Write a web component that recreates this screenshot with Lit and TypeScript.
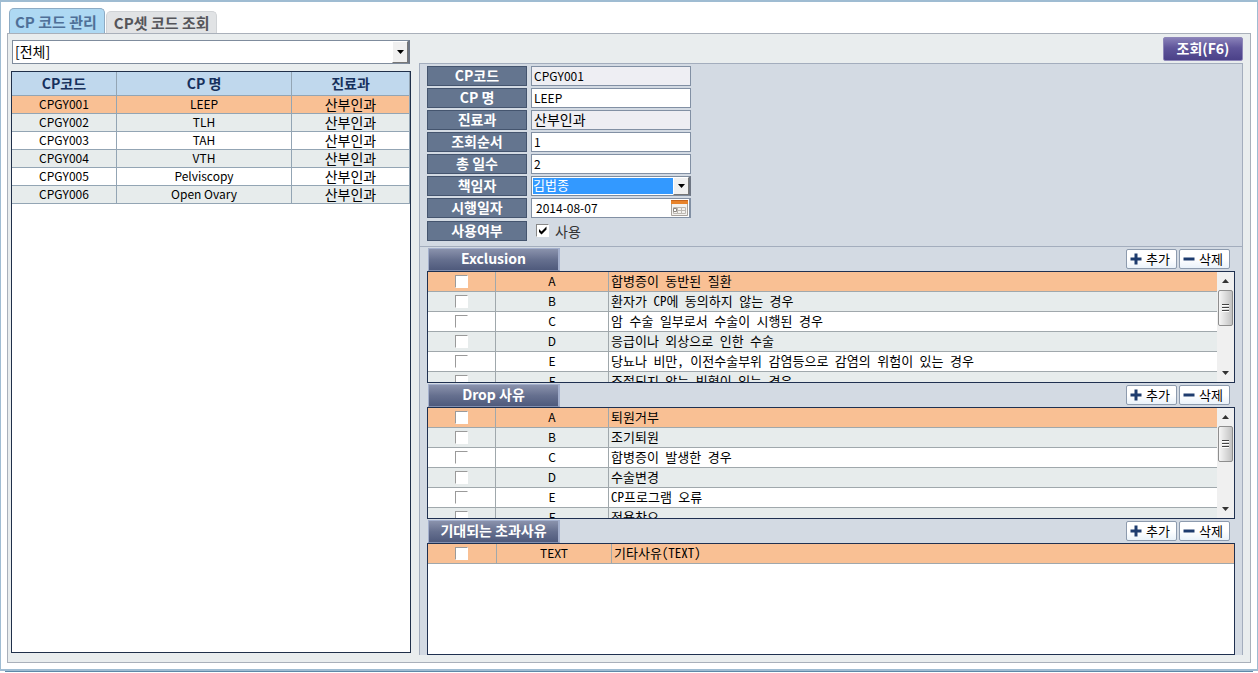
import { LitElement, html, css, nothing, svg } from "lit";
import { customElement, property, state } from "lit/decorators.js";
import { classMap } from "lit/directives/class-map.js";

const arrowDown = html`<svg class="tri" viewBox="0 0 7 4" width="7" height="4" aria-hidden="true"><path d="M0 0h7L3.500 4z" fill="#000" /></svg>`;

@customElement("drop-box")
class DropBox extends LitElement {
  @property() name = "";
  @property() label = "";
  @property({ type: Array }) options: string[] = [];
  @property({ type: Boolean, reflect: true }) highlighted = false;

  static styles = css`
    :host { display: block; position: relative; height: 24px; }
    select {
      appearance: none; display: block; box-sizing: border-box; width: 100%; height: 100%; margin: 0;
      padding: 0 20px 3px 2px; border: 1px solid #7f8c9d; border-right: 2px solid #6e7684; border-radius: 0;
      background: #fff; color: #000; outline: none;
      font: 14px/18px "Noto Sans CJK KR", sans-serif;
    }
    .button {
      position: absolute; top: 1px; right: 2px; bottom: 1px; width: 16px; box-sizing: border-box;
      display: grid; place-items: center; pointer-events: none;
      background: #f0f0f0; border: 1px solid #fff; border-right-color: #777; border-bottom-color: #777;
    }
    :host([highlighted]) { height: 20px; }
    :host([highlighted]) select {
      padding-left: 1px; color: #fff; font-size: 13px; line-height: 16px;
      background: #3399ff; box-shadow: inset 0 0 0 1px #fff;
    }
  `;

  render() {
    return html`
      <select id="box" name=${this.name} aria-label=${this.label}>
        ${this.options.map((o) => html`<option>${o}</option>`)}
      </select>
      <span class="button">${arrowDown}</span>
    `;
  }
}

interface Reason { code: string; text: string; }

@customElement("reason-section")
class ReasonSection extends LitElement {
  @property() heading = "";
  @property({ type: Array }) rows: Reason[] = [];
  @property({ type: Boolean, reflect: true }) fill = false;
  @state() private selected = 0;

  static styles = css`
    :host { display: flex; flex-direction: column; font-family: "Noto Sans CJK KR", sans-serif; }
    :host([fill]) { flex: 1; }
    .bar { display: flex; align-items: center; height: 24px; padding: 0 5px 0 1px; gap: 2px; box-sizing: border-box; }
    h2 {
      margin: 0 auto 0 0; width: 132px; height: 23px; box-sizing: border-box; border: 1px solid #a3afcc;
      border-right-width: 2px; border-bottom: 1px solid #8390b0;
      background: linear-gradient(#8a92ac, #66708f 50%, #4f5a7c); color: #fff;
      font-size: 14px; line-height: 18px; font-weight: 700; text-align: center; white-space: nowrap;
    }
    .act {
      display: flex; align-items: center; gap: 4px; width: 51px; height: 20px; box-sizing: border-box; margin: 0; padding: 0 0 1px 3px;
      border: 1px solid #8d9bae; border-radius: 2px; background: linear-gradient(#fff 50%, #eaf2fa);
      color: #000; font: 13px/16px "Noto Sans CJK KR", sans-serif; white-space: nowrap;
    }
    .act svg { flex: none; }
    .grid { display: flex; height: 112px; box-sizing: border-box; border: 1px solid #1f3050; background: #fff; overflow: hidden; }
    :host([fill]) .grid { flex: 1; height: auto; min-height: 112px; }
    .view { flex: 1; min-width: 0; overflow-y: auto; scrollbar-width: none; }
    table { width: 100%; table-layout: fixed; border-spacing: 0; }
    .pick { width: 68px; }
    .code { width: 113px; }
    :host([fill]) .pick { width: 69px; }
    :host([fill]) .code { width: 115px; }
    td {
      height: 20px; box-sizing: border-box; padding: 0 0 2px; border-bottom: 1px solid #a0a8ac; border-right: 1px solid #a0a8ac;
      font-size: 12px; line-height: 16px; text-align: center; white-space: nowrap; overflow: hidden;
    }
    td:first-child { padding: 0; }
    td:last-child { border-right: 0; text-align: left; padding-left: 2px; font-size: 13px; font-family: "Noto Sans Mono CJK KR", "Noto Sans CJK KR", sans-serif; }
    tr:nth-child(even) td { background: #e7ecec; }
    tr.on td { background: #f9c094; }
    input {
      appearance: none; display: block; margin: 0 0 0 27px; width: 13px; height: 13px; box-sizing: border-box;
      background: #fff; border: 1px solid #fff; border-top-color: #9a9a9a; border-left-color: #9a9a9a; border-radius: 0;
    }
    .scroll { width: 17px; flex: none; display: flex; flex-direction: column; align-items: center; background: #f0f0f0; }
    .step { flex: none; width: 17px; height: 18px; padding: 0; border: 0; background: none; display: grid; place-items: center; }
    .thumb {
      width: 15px; height: 36px; box-sizing: border-box; border: 1px solid #8e8e8e; border-radius: 2px;
      background: linear-gradient(90deg, #f6f6f6, #dcdcdc 50%, #c2c2c2); display: grid; place-items: center;
    }
    .rest { flex: 1; }
  `;

  render() {
    return html`
      <div class="bar">
        <h2>${this.heading}</h2>
        <button class="act" type="button">
          <svg width="12" height="12" viewBox="0 0 12 12" aria-hidden="true"><path d="M4.500 0.500h3v4h4v3h-4v4h-3v-4h-4v-3h4z" fill="#1e3c6e" /></svg>추가
        </button>
        <button class="act" type="button">
          <svg width="12" height="12" viewBox="0 0 12 12" aria-hidden="true"><path d="M0.500 4.500h11v3h-11z" fill="#1e3c6e" /></svg>삭제
        </button>
      </div>
      <div class="grid">
        <div class="view">
          <table>
            <colgroup><col class="pick" /><col class="code" /><col /></colgroup>
            <tbody>
              ${this.rows.map((r, i) => html`
                <tr class=${classMap({ on: i === this.selected })} @click=${() => (this.selected = i)}>
                  <td><input type="checkbox" aria-label=${r.text} /></td>
                  <td>${r.code}</td>
                  <td>${r.text}</td>
                </tr>`)}
            </tbody>
          </table>
        </div>
        ${this.fill ? nothing : html`
          <div class="scroll">
            <button class="step" type="button" aria-label="위로"><svg width="7" height="4" viewBox="0 0 7 4"><path d="M0 4h7L3.500 0z" fill="#333" /></svg></button>
            <div class="thumb"><svg width="7" height="8" viewBox="0 0 7 8">${[0, 3, 6].map((y) => svg`<path d="M0 ${y}h7v1h-7z" fill="#444"/><path d="M0 ${y + 1}h7v1h-7z" fill="#fff"/>`)}</svg></div>
            <div class="rest"></div>
            <button class="step" type="button" aria-label="아래로"><svg width="7" height="4" viewBox="0 0 7 4"><path d="M0 0h7L3.500 4z" fill="#333" /></svg></button>
          </div>`}
      </div>
    `;
  }
}

const PATHS = [
  ["CPGY001", "LEEP"],
  ["CPGY002", "TLH"],
  ["CPGY003", "TAH"],
  ["CPGY004", "VTH"],
  ["CPGY005", "Pelviscopy"],
  ["CPGY006", "Open Ovary"],
];

const EXCLUSION: Reason[] = [
  { code: "A", text: "합병증이 동반된 질환" },
  { code: "B", text: "환자가 CP에 동의하지 않는 경우" },
  { code: "C", text: "암 수술 일부로서 수술이 시행된 경우" },
  { code: "D", text: "응급이나 외상으로 인한 수술" },
  { code: "E", text: "당뇨나 비만, 이전수술부위 감염등으로 감염의 위험이 있는 경우" },
  { code: "F", text: "조절되지 않는 빈혈이 있는 경우" },
];

const DROP: Reason[] = [
  { code: "A", text: "퇴원거부" },
  { code: "B", text: "조기퇴원" },
  { code: "C", text: "합병증이 발생한 경우" },
  { code: "D", text: "수술변경" },
  { code: "E", text: "CP프로그램 오류" },
  { code: "F", text: "적용착오" },
];

const OVERRUN: Reason[] = [{ code: "TEXT", text: "기타사유(TEXT)" }];

@customElement("app-root")
class AppRoot extends LitElement {
  @state() private current = 0;

  static styles = css`
    :host { display: block; font-family: "Noto Sans CJK KR", sans-serif; color: #000; }
    .page { min-height: 100vh; box-sizing: border-box; display: flex; flex-direction: column; background: #fff; }
    .frame {
      flex: 1; display: flex; flex-direction: column; padding: 7px 6px 6px;
      border: 1px solid #9fbcd2; border-top-width: 2px; border-bottom-width: 2px;
    }
    .foot { height: 2px; box-sizing: border-box; margin: 0 5px; border-top: 1px solid #5f89a8; }
    .tabs { display: flex; align-items: flex-end; gap: 1px; height: 24px; padding-left: 2px; }
    .tab {
      height: 22px; margin: 0; padding: 0 6px 0 7px; border: 1px solid #d0d3d6; border-bottom: 0; border-radius: 5px 5px 0 0;
      background: #e1e3e5; color: #55555a; font: 700 15px/20px "Noto Sans CJK KR", sans-serif; white-space: nowrap;
    }
    .tab.on { height: 25px; padding: 2px 7px 0 5px; background: #aed9f3; border-color: #8dabc4; color: #4f7098; }
    .panel {
      flex: 1; display: flex; gap: 8px; padding: 0 7px 7px 3px;
      border: 1px solid #a9b0ba; background: #e9edee;
    }
    .left { flex: 0 0 400px; display: flex; flex-direction: column; gap: 7px; padding: 6px 0 2px; }
    .left drop-box { margin: 0 1px; }
    .list { flex: 1; border: 1px solid #20304a; background: #fff; }
    table { width: 100%; table-layout: fixed; border-spacing: 0; }
    .c1 { width: 105px; }
    .c2 { width: 175px; }
    th, td { box-sizing: border-box; padding: 0 0 2px; border-right: 1px solid #93a5b4; border-bottom: 1px solid #93a5b4; text-align: center; white-space: nowrap; }
    th { height: 24px; background: #c0d8ed; color: #16305c; font-size: 14px; line-height: 18px; font-weight: 700; }
    td { height: 18px; font-size: 12px; line-height: 14px; }
    td.ko { font-size: 14px; }
    tbody tr:nth-child(even) td { background: #e7ecec; }
    tbody tr.on td { background: #f9c094; }
    .right { flex: 1; min-width: 0; display: flex; flex-direction: column; }
    .tools { display: flex; justify-content: flex-end; height: 29px; padding-top: 3px; box-sizing: border-box; }
    .find {
      width: 80px; height: 24px; box-sizing: border-box; margin: 0; padding: 0 0 2px; border: 1px solid #8d86b8; border-radius: 2px;
      background: linear-gradient(#8880b8, #5f559a 45%, #4b4188); color: #fff; font: 700 14px/18px "Noto Sans CJK KR", sans-serif;
    }
    .detail {
      flex: 1; display: flex; flex-direction: column;
      border: 1px solid #a3adbd; border-bottom: 0; background: #d3dae3;
    }
    .form { display: grid; grid-template-columns: 100px 160px; column-gap: 4px; row-gap: 2px; padding: 2px 7px 5px; border-bottom: 1px solid #a3adbd; }
    .form label, .form .cap {
      height: 20px; box-sizing: border-box; border: 1px solid #44546e; background: #64758f; color: #fff;
      font-size: 14px; line-height: 17px; font-weight: 700; text-align: center;
    }
    .form input[type="text"] {
      box-sizing: border-box; width: 100%; min-width: 0; height: 20px; margin: 0; padding: 0 2px 2px; border: 1px solid #8290a4; border-radius: 0;
      background: #fff; color: #000; font: 12px/16px "Noto Sans CJK KR", sans-serif; outline: none;
    }
    .form input[readonly] { background: #eeeef3; }
    .form input.ko { font-size: 14px; }
    .date { display: flex; height: 20px; box-sizing: border-box; border: 1px solid #8290a4; border-right-width: 2px; background: #fff; }
    .form .date input { flex: 1; height: 18px; border: 0; padding-left: 4px; }
    .cal { margin: 0; padding: 0; border: 0; background: none; width: 19px; height: 18px; }
    .cal svg { display: block; }
    .use { display: flex; align-items: center; gap: 6px; padding-left: 5px; height: 21px; }
    .form .use label { height: auto; border: 0; background: none; color: #333; font-weight: 400; line-height: 20px; }
    .use input { position: absolute; opacity: 0; margin: 0; width: 13px; height: 13px; }
    .box { width: 13px; height: 13px; box-sizing: border-box; background: #fff; border: 1px solid #fff; border-top-color: #888; border-left-color: #888; }
    .box svg { display: block; }
    .use input:not(:checked) + .box svg { visibility: hidden; }
    .cap { margin-top: 1px; }
    .groups { flex: 1; display: flex; flex-direction: column; padding: 0 7px; }
  `;

  private field(id: string, label: string, value: string, readonly = false, ko = false) {
    return html`
      <label for=${id}>${label}</label>
      <input type="text" id=${id} class=${classMap({ ko })} .value=${value} ?readonly=${readonly} />
    `;
  }

  render() {
    return html`
      <div class="page">
        <div class="frame">
          <div class="tabs" role="tablist">
            <button class="tab on" type="button" role="tab" aria-selected="true">CP 코드 관리</button>
            <button class="tab" type="button" role="tab" aria-selected="false">CP셋 코드 조회</button>
          </div>
          <main class="panel">
            <div class="left">
              <drop-box name="dept" label="진료과" .options=${["[전체]"]}></drop-box>
              <div class="list">
                <table>
                  <colgroup><col class="c1" /><col class="c2" /><col /></colgroup>
                  <thead><tr><th>CP코드</th><th>CP 명</th><th>진료과</th></tr></thead>
                  <tbody>
                    ${PATHS.map(([code, name], i) => html`
                      <tr class=${classMap({ on: i === this.current })} @click=${() => (this.current = i)}>
                        <td>${code}</td><td>${name}</td><td class="ko">산부인과</td>
                      </tr>`)}
                  </tbody>
                </table>
              </div>
            </div>
            <div class="right">
              <div class="tools"><button class="find" type="button">조회(F6)</button></div>
              <div class="detail">
                <form class="form">
                  ${this.field("code", "CP코드", "CPGY001", true)}
                  ${this.field("name", "CP 명", "LEEP")}
                  ${this.field("dept", "진료과", "산부인과", true, true)}
                  ${this.field("order", "조회순서", "1")}
                  ${this.field("days", "총 일수", "2")}
                  <label for="owner">책임자</label>
                  <drop-box id="owner" name="owner" label="책임자" highlighted .options=${["김법종"]}></drop-box>
                  <label for="start">시행일자</label>
                  <div class="date">
                    <input type="text" id="start" .value=${"2014-08-07"} />
                    <button class="cal" type="button" aria-label="달력">
                      <svg width="19" height="18" viewBox="0 0 19 18">
                        <path d="M1.500 1.500h16v15h-16z" fill="#f4f2ef" stroke="#a8a29c" />
                        <path d="M1 1h17v4h-17z" fill="#e8832a" /><path d="M1 1h17v1h-17z" fill="#c9651a" />
                        <path d="M3.500 8.500h4v6h-4zM7.500 8.500h4v6h-4zM11.500 8.500h4v6h-4zM7.500 11.500h8" fill="none" stroke="#bdb8b2" />
                        <path d="M3.500 9.500h3v3h-3z" fill="#fff" stroke="#8a8580" />
                      </svg>
                    </button>
                  </div>
                  <span class="cap">사용여부</span>
                  <div class="use">
                    <input type="checkbox" id="use" checked />
                    <span class="box"><svg width="11" height="11" viewBox="0 0 11 11"><path d="M2 4v3l2.500 2.500L9.500 4.500v-3L4.500 6.500z" fill="#000" /></svg></span>
                    <label for="use">사용</label>
                  </div>
                </form>
                <div class="groups">
                  <reason-section heading="Exclusion" .rows=${EXCLUSION}></reason-section>
                  <reason-section heading="Drop 사유" .rows=${DROP}></reason-section>
                  <reason-section heading="기대되는 초과사유" .rows=${OVERRUN} fill></reason-section>
                </div>
              </div>
            </div>
          </main>
        </div>
        <div class="foot"></div>
      </div>
    `;
  }
}
